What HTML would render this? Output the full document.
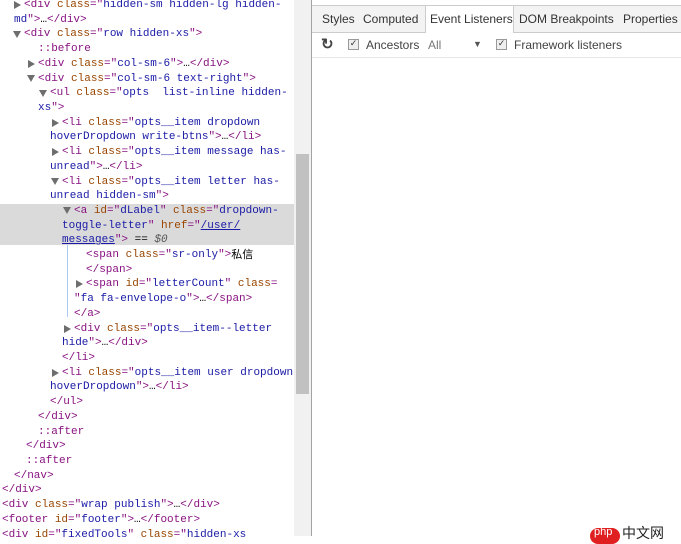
<!DOCTYPE html>
<html><head><meta charset="utf-8"><style>
body{margin:0;width:681px;height:536px;overflow:hidden;background:#fff;position:relative;font-family:"Liberation Mono",monospace;font-size:11px}
.l{position:absolute;white-space:pre;line-height:15px;height:15px}
.t{color:#881280}.a{color:#994500}.v{color:#1a1aa6}.k{color:#000}.u{color:#1a1aa6;text-decoration:underline}.p{color:#881280}
.tri{position:absolute;width:0;height:0}
.dn{border-left:4px solid transparent;border-right:4px solid transparent;border-top:7px solid #6e6e6e}
.rt{border-top:4px solid transparent;border-bottom:4px solid transparent;border-left:7px solid #6e6e6e}
.r{position:absolute;font-family:"Liberation Sans",sans-serif;font-size:12px;color:#333;white-space:nowrap}
.cb{position:absolute;width:9px;height:9px;border:1px solid #999;background:#eee;font-size:9px;line-height:9px;text-align:center;color:#333}
</style></head><body>
<div style="position:absolute;left:0;top:204px;width:294px;height:41px;background:#dadada"></div>
<div style="position:absolute;left:67px;top:245px;width:1px;height:72px;background:#a8c8f0"></div>
<div style="position:absolute;left:294px;top:0;width:17px;height:536px;background:#f1f1f1"></div>
<div style="position:absolute;left:296px;top:154px;width:13px;height:240px;background:#c1c1c1"></div>
<div style="position:absolute;left:311px;top:0;width:1px;height:536px;background:#a3a3a3"></div>

<div id="dom"></div>
<script>
const L=[
[24,'tri_r','<span class="t">&lt;div</span> <span class="a">class</span><span class="t">="</span><span class="v">hidden-sm hidden-lg hidden-</span>'],
[14,'','<span class="v">md</span><span class="t">"&gt;</span>…<span class="t">&lt;/div&gt;</span>'],
[24,'d','<span class="t">&lt;div</span> <span class="a">class</span><span class="t">="</span><span class="v">row hidden-xs</span><span class="t">"&gt;</span>'],
[38,'','<span class="p">::before</span>'],
[38,'r','<span class="t">&lt;div</span> <span class="a">class</span><span class="t">="</span><span class="v">col-sm-6</span><span class="t">"&gt;</span>…<span class="t">&lt;/div&gt;</span>'],
[38,'d','<span class="t">&lt;div</span> <span class="a">class</span><span class="t">="</span><span class="v">col-sm-6 text-right</span><span class="t">"&gt;</span>'],
[50,'d','<span class="t">&lt;ul</span> <span class="a">class</span><span class="t">="</span><span class="v">opts  list-inline hidden-</span>'],
[38,'','<span class="v">xs</span><span class="t">"&gt;</span>'],
[62,'r','<span class="t">&lt;li</span> <span class="a">class</span><span class="t">="</span><span class="v">opts__item dropdown</span>'],
[50,'','<span class="v">hoverDropdown write-btns</span><span class="t">"&gt;</span>…<span class="t">&lt;/li&gt;</span>'],
[62,'r','<span class="t">&lt;li</span> <span class="a">class</span><span class="t">="</span><span class="v">opts__item message has-</span>'],
[50,'','<span class="v">unread</span><span class="t">"&gt;</span>…<span class="t">&lt;/li&gt;</span>'],
[62,'d','<span class="t">&lt;li</span> <span class="a">class</span><span class="t">="</span><span class="v">opts__item letter has-</span>'],
[50,'','<span class="v">unread hidden-sm</span><span class="t">"&gt;</span>'],
[74,'d','<span class="t">&lt;a</span> <span class="a">id</span><span class="t">="</span><span class="v">dLabel</span><span class="t">"</span> <span class="a">class</span><span class="t">="</span><span class="v">dropdown-</span>'],
[62,'','<span class="v">toggle-letter</span><span class="t">"</span> <span class="a">href</span><span class="t">="</span><span class="u">/user/</span>'],
[62,'','<span class="u">messages</span><span class="t">"&gt;</span> == <i style="color:#555">$0</i>'],
[86,'','<span class="t">&lt;span</span> <span class="a">class</span><span class="t">="</span><span class="v">sr-only</span><span class="t">"&gt;</span><span class="k" style="font-family:\'Noto Sans CJK SC\',sans-serif;line-height:12px;display:inline-block;vertical-align:top;margin-top:0">私信</span>'],
[86,'','<span class="t">&lt;/span&gt;</span>'],
[86,'r','<span class="t">&lt;span</span> <span class="a">id</span><span class="t">="</span><span class="v">letterCount</span><span class="t">"</span> <span class="a">class</span><span class="t">=</span>'],
[74,'','<span class="t">"</span><span class="v">fa fa-envelope-o</span><span class="t">"&gt;</span>…<span class="t">&lt;/span&gt;</span>'],
[74,'','<span class="t">&lt;/a&gt;</span>'],
[74,'r','<span class="t">&lt;div</span> <span class="a">class</span><span class="t">="</span><span class="v">opts__item--letter</span>'],
[62,'','<span class="v">hide</span><span class="t">"&gt;</span>…<span class="t">&lt;/div&gt;</span>'],
[62,'','<span class="t">&lt;/li&gt;</span>'],
[62,'r','<span class="t">&lt;li</span> <span class="a">class</span><span class="t">="</span><span class="v">opts__item user dropdown</span>'],
[50,'','<span class="v">hoverDropdown</span><span class="t">"&gt;</span>…<span class="t">&lt;/li&gt;</span>'],
[50,'','<span class="t">&lt;/ul&gt;</span>'],
[38,'','<span class="t">&lt;/div&gt;</span>'],
[38,'','<span class="p">::after</span>'],
[26,'','<span class="t">&lt;/div&gt;</span>'],
[26,'','<span class="p">::after</span>'],
[14,'','<span class="t">&lt;/nav&gt;</span>'],
[2,'','<span class="t">&lt;/div&gt;</span>'],
[2,'','<span class="t">&lt;div</span> <span class="a">class</span><span class="t">="</span><span class="v">wrap publish</span><span class="t">"&gt;</span>…<span class="t">&lt;/div&gt;</span>'],
[2,'','<span class="t">&lt;footer</span> <span class="a">id</span><span class="t">="</span><span class="v">footer</span><span class="t">"&gt;</span>…<span class="t">&lt;/footer&gt;</span>'],
[2,'','<span class="t">&lt;div</span> <span class="a">id</span><span class="t">="</span><span class="v">fixedTools</span><span class="t">"</span> <span class="a">class</span><span class="t">="</span><span class="v">hidden-xs</span>']
];
let h='';
L.forEach((e,i)=>{const y=-2+i*14.71;
h+=`<div class="l" style="left:${e[0]}px;top:${y}px">${e[2]}</div>`;
if(e[1]=='d')h+=`<div class="tri dn" style="left:${e[0]-11}px;top:${y+3.5}px"></div>`;
if(e[1]=='r'||e[1]=='tri_r')h+=`<div class="tri rt" style="left:${e[0]-10}px;top:${y+3}px"></div>`;
});
document.getElementById('dom').innerHTML=h;
</script>

<div style="position:absolute;left:312px;top:5px;width:369px;height:26px;background:#f3f3f3;border-bottom:1px solid #ccc;border-top:1px solid #ccc"></div>
<div style="position:absolute;left:425px;top:6px;width:87px;height:27px;background:#fff;border-left:1px solid #ccc;border-right:1px solid #ccc"></div>
<div class="r" style="left:322px;top:12px">Styles</div>
<div class="r" style="left:363px;top:12px">Computed</div>
<div class="r" style="left:430px;top:12px">Event Listeners</div>
<div class="r" style="left:519px;top:12px">DOM Breakpoints</div>
<div class="r" style="left:623px;top:12px">Properties</div>
<div style="position:absolute;left:312px;top:57px;width:369px;height:1px;background:#e6e6e6"></div>
<div class="r" style="left:321px;top:35px;font-size:15px;font-weight:bold;color:#444">&#x21bb;</div>
<div class="cb" style="left:348px;top:39px">✓</div>
<div class="r" style="left:366px;top:38px;color:#444">Ancestors</div>
<div class="r" style="left:428px;top:38px;color:#777">All</div>
<div class="r" style="left:473px;top:39px;font-size:9px;color:#555">▼</div>
<div class="cb" style="left:496px;top:39px">✓</div>
<div class="r" style="left:514px;top:38px;color:#444">Framework listeners</div>
<div style="position:absolute;left:590px;top:528px;width:30px;height:16px;border-radius:8px;background:#e02020"></div>
<div class="r" style="left:594px;top:526px;color:#fff;font-size:11px">php</div>
<div class="r" style="left:622px;top:523px;font-family:'Noto Sans CJK SC',sans-serif;font-size:14px;color:#222">中文网</div>
</body></html>
